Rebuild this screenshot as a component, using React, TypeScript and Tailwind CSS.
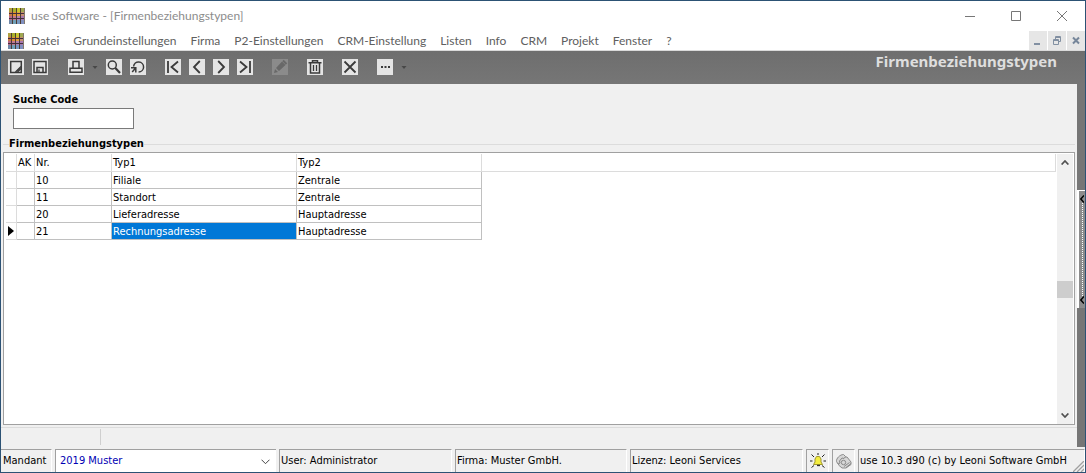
import type { ReactNode } from "react";

const menu = [
  "Datei", "Grundeinstellungen", "Firma", "P2-Einstellungen", "CRM-Einstellung",
  "Listen", "Info", "CRM", "Projekt", "Fenster", "?",
];

const rows = [
  { nr: "10", typ1: "Filiale", typ2: "Zentrale" },
  { nr: "11", typ1: "Standort", typ2: "Zentrale" },
  { nr: "20", typ1: "Lieferadresse", typ2: "Hauptadresse" },
  { nr: "21", typ1: "Rechnungsadresse", typ2: "Hauptadresse", active: true },
];

const logoColors = [
  ["#b0a040", "#a8b02c", "#c8c830", "#a0a850"],
  ["#c87848", "#e09030", "#e0a040", "#c89070"],
  ["#b86888", "#c07890", "#b080b0", "#a878b0"],
  ["#7088a8", "#70a0b8", "#7898c0", "#8090c0"],
];

function AppLogo() {
  return (
    <svg viewBox="0 0 16 16" className="size-4 shrink-0" aria-hidden="true" shapeRendering="crispEdges">
      {logoColors.map((line, y) =>
        line.map((color, x) => <rect key={`${x}-${y}`} x={x * 4} y={y * 4} width="4" height="4" fill={color} />),
      )}
      <path d="M3.5 0v16M7.5 0v16M11.5 0v16" stroke="#4c3c34" />
      <path d="M0 5.5h16M0 10.5h16" stroke="#40303c" />
      <path d="M15.5 0v16" stroke="#84786c" />
    </svg>
  );
}

function Tool({ label, children, disabled = false }: { label: string; children: ReactNode; disabled?: boolean }) {
  return (
    <button
      type="button"
      aria-label={label}
      disabled={disabled}
      className="size-4 shrink-0 bg-[#e4e4e4] text-[#3a3a3a] disabled:bg-[#8b8b8b] disabled:text-[#686868]"
    >
      <svg viewBox="0 0 16 16" className="size-4" fill="none" stroke="currentColor" strokeWidth="1.5">
        {children}
      </svg>
    </button>
  );
}

function Caret() {
  return (
    <svg viewBox="0 0 6 3" className="h-[3px] w-[6px] shrink-0" aria-hidden="true">
      <path d="M.5 0h5L3 3z" fill="#484848" />
    </svg>
  );
}

function Pane({ className, children }: { className: string; children: ReactNode }) {
  return (
    <div
      className={`flex items-center overflow-hidden border-t border-l border-[#a0a0a0] border-r border-r-white whitespace-nowrap ${className}`}
    >
      {children}
    </div>
  );
}

function Toolbar() {
  return (
    <div className="flex h-[33px] items-start bg-linear-to-b from-[#6e6e6e] to-[#767676] pr-[28px] pl-[7px]">
      <div className="flex items-center gap-5 pt-2">
        <div className="flex gap-2">
          <Tool label="Neu">
            <path d="M2.7 2.5h10.6v11H2.7z" />
            <path d="M13 7.5l-5.5 5.5M9.5 13l3.5-3.5" strokeWidth="1.3" />
          </Tool>
          <Tool label="Speichern">
            <path d="M2 2.5h12v11H2zM5 13V8.5h6V13" />
            <path d="M7 10.5v3" strokeWidth="1.2" />
          </Tool>
        </div>
        <div className="flex items-center gap-[19px]">
          <div className="flex items-center gap-2">
            <Tool label="Drucken">
              <path d="M5 9V2.5h6V9M2 9.2h12v4H2z" />
            </Tool>
            <Caret />
            <Tool label="Suchen">
              <circle cx="6.3" cy="6" r="4" />
              <path d="M9.3 9l4.7 5" strokeWidth="2.2" />
            </Tool>
            <Tool label="Aktualisieren">
              <path d="M3.6 7.5a5 5 0 1 1 5 5.5M1 8.8h4.8v4.7M5.6 9l-3.4 4" />
            </Tool>
          </div>
          <div className="flex gap-2">
            <Tool label="Erster Datensatz">
              <path d="M3 2v12M13 2.5L6.5 8l6.5 5.5" strokeWidth="1.8" />
            </Tool>
            <Tool label="Vorheriger Datensatz">
              <path d="M10.8 2L5 8l5.8 6" strokeWidth="1.8" />
            </Tool>
            <Tool label="Nächster Datensatz">
              <path d="M5.2 2L11 8l-5.8 6" strokeWidth="1.8" />
            </Tool>
            <Tool label="Letzter Datensatz">
              <path d="M13 2v12M3 2.5L9.5 8 3 13.5" strokeWidth="1.8" />
            </Tool>
          </div>
          <Tool label="Bearbeiten" disabled>
            <path d="M2 14l1-4 3 3zM4 9l6-6.5 3.5 3.5L7 12z" fill="currentColor" stroke="none" />
            <path d="M11 1.5L14.5 5" strokeWidth="2" />
          </Tool>
          <Tool label="Löschen">
            <path d="M1.5 3.7h13M5.5 3V1.7h5V3M3.5 4v10h9V4" strokeWidth="1.5" />
            <path d="M6.5 6v6M9.5 6v6" strokeWidth="1.3" />
          </Tool>
          <Tool label="Abbrechen">
            <path d="M2.5 2.5l11 11M13.5 2.5l-11 11" strokeWidth="1.8" />
          </Tool>
          <div className="flex items-center gap-2">
            <Tool label="Mehr">
              <path d="M4 8h2M7.5 8h2M11 8h2" strokeWidth="2" />
            </Tool>
            <Caret />
          </div>
        </div>
      </div>
      <h1 className="ml-auto font-['Noto_Sans',sans-serif] text-[15px] leading-5 font-bold text-[#dedede]">
        Firmenbeziehungstypen
      </h1>
    </div>
  );
}

function Scrollbar() {
  return (
    <div className="mr-px flex w-4 shrink-0 flex-col bg-[#f0f0f0]">
      <button type="button" aria-label="Nach oben" className="flex h-[17px] items-center justify-center">
        <svg viewBox="0 0 8 5" className="h-[5px] w-2" fill="none" stroke="#505050" strokeWidth="1.7">
          <path d="M.6 4.5L4 1l3.4 3.5" />
        </svg>
      </button>
      <div className="grow-[109]" />
      <div className="h-[17px] bg-[#cdcdcd]" />
      <div className="grow-[109]" />
      <button type="button" aria-label="Nach unten" className="flex h-[17px] items-center justify-center">
        <svg viewBox="0 0 8 5" className="h-[5px] w-2" fill="none" stroke="#505050" strokeWidth="1.7">
          <path d="M.6 .5L4 4 7.4 .5" />
        </svg>
      </button>
    </div>
  );
}

function Grid() {
  const cell = "h-[17px] border-r border-b border-[#c0c0c0] p-0 pt-0.5 pl-px leading-[14px]";
  const head = "h-[18px] border-r border-b border-[#dcdcdc] p-0 pt-px pl-px text-left leading-4 font-normal";
  return (
    <table className="w-full table-fixed border-separate border-spacing-0">
      <colgroup>
        <col className="w-[11px]" />
        <col className="w-[18px]" />
        <col className="w-[77px]" />
        <col className="w-[185px]" />
        <col className="w-[185px]" />
        <col />
      </colgroup>
      <thead>
        <tr>
          <th className={head} aria-label="Markierung" />
          <th className={head}>AK</th>
          <th className={head}>Nr.</th>
          <th className={head}>Typ1</th>
          <th className={head}>Typ2</th>
          <th className={head} aria-label="Leer" />
        </tr>
      </thead>
      <tbody>
        {rows.map((r) => (
          <tr key={r.nr}>
            <td className="h-[17px] border-r border-b border-[#dcdcdc] p-0">
              {r.active && (
                <svg viewBox="0 0 6 10" className="ml-0.5 h-[10px] w-[6px]" aria-label="Aktueller Datensatz">
                  <path d="M0 0l6 5-6 5z" fill="#000" />
                </svg>
              )}
            </td>
            <td className={cell} />
            <td className={cell}>{r.nr}</td>
            <td className={r.active ? `${cell} bg-[#0078d7] text-white` : cell}>{r.typ1}</td>
            <td className={cell}>{r.typ2}</td>
            <td className="p-0" />
          </tr>
        ))}
      </tbody>
    </table>
  );
}

export default function App() {
  return (
    <div className="flex min-h-screen flex-col border border-[#2c5274] bg-[#f0f0f0] font-['DejaVu_Sans_Condensed','Noto_Sans',sans-serif] text-[11px] text-black">
      <header className="bg-white font-['Lato','Noto_Sans',sans-serif] text-[12px]">
        <div className="flex h-[30px] items-center gap-1.5 pr-[18px] pl-2 text-[#8c8c8c]">
          <AppLogo />
          <span>use Software - [Firmenbeziehungstypen]</span>
          <div className="ml-auto flex items-center gap-9">
            <button type="button" aria-label="Minimieren" className="size-[10px]">
              <svg viewBox="0 0 10 10" stroke="#777"><path d="M0 5.5h10" /></svg>
            </button>
            <button type="button" aria-label="Maximieren" className="size-[10px]">
              <svg viewBox="0 0 10 10" stroke="#777" fill="none"><path d="M.5 .5h9v9h-9z" /></svg>
            </button>
            <button type="button" aria-label="Schließen" className="size-[10px]">
              <svg viewBox="0 0 10 10" stroke="#777"><path d="M0 0l10 10M10 0L0 10" /></svg>
            </button>
          </div>
        </div>
        <div className="flex h-5 items-center border-b border-[#dadada] pl-[7px] text-[#606060]">
          <AppLogo />
          <nav className="ml-[7px] flex gap-3.5">
            {menu.map((m) => (
              <button type="button" key={m}>{m}</button>
            ))}
          </nav>
          <div className="ml-auto flex gap-px">
            <button type="button" aria-label="Fenster minimieren" className="h-[19px] w-[18px] bg-[#e6e6e6]">
              <svg viewBox="0 0 18 19" stroke="#8290a2" strokeWidth="2"><path d="M5 13h6" /></svg>
            </button>
            <button type="button" aria-label="Fenster wiederherstellen" className="h-[19px] w-[18px] bg-[#e6e6e6]">
              <svg viewBox="0 0 18 19" stroke="#8290a2" fill="none">
                <path d="M5.5 8.5h5v5h-5zM5 9.5h6M7.5 8V5.5h5v5H11M7 6.5h6" />
              </svg>
            </button>
            <button type="button" aria-label="Fenster schließen" className="h-[19px] w-[18px] bg-[#e6e6e6]">
              <svg viewBox="0 0 18 19" stroke="#76869a" strokeWidth="2"><path d="M6 6.5l6 6M12 6.5l-6 6" /></svg>
            </button>
          </div>
        </div>
      </header>

      <Toolbar />

      <div className="flex grow">
        <main className="flex min-w-0 grow flex-col">
          <div className="flex flex-col items-start pt-2 pl-3">
            <label htmlFor="code" className="leading-4 font-bold">Suche Code</label>
            <input id="code" type="text" className="h-[21px] w-[121px] border border-[#7a7a7a] bg-white px-1 outline-none" />
          </div>
          <section className="mt-[7px] flex grow flex-col pr-0.5 pl-0.5">
            <div className="flex h-4 items-center">
              <div className="h-px w-1.5 bg-[#dcdcdc]" />
              <h2 className="font-bold">Firmenbeziehungstypen</h2>
              <div className="h-px grow bg-[#dcdcdc]" />
            </div>
            <div className="flex grow border border-[#a0a0a0] bg-white pt-px">
              <div className="min-w-0 grow pr-px pl-0.5"><Grid /></div>
              <Scrollbar />
            </div>
          </section>
          <div className="mt-0.5 h-5 border-t border-[#dcdcdc]">
            <div className="mt-px h-4 w-[100px] border-r border-[#cfcfcf]" />
          </div>
        </main>
        <aside className="flex w-2 shrink-0 flex-col bg-[#767676]">
          <div className="grow-[105]" />
          <button
            type="button"
            aria-label="Seitenleiste einblenden"
            className="flex h-[118px] flex-col items-center justify-between border-t border-l-2 border-white bg-[#8c8c8c] py-1"
          >
            <svg viewBox="0 0 4 8" className="h-2 w-1" fill="none" stroke="#000" strokeWidth="1.5"><path d="M4 .5L.8 4 4 7.5" /></svg>
            <span className="w-px grow border-l border-dotted border-white" />
            <svg viewBox="0 0 4 8" className="h-2 w-1" fill="none" stroke="#000" strokeWidth="1.5"><path d="M4 .5L.8 4 4 7.5" /></svg>
          </button>
          <div className="grow-[138]" />
        </aside>
      </div>

      <footer className="flex h-[25px] gap-[3px] pt-0.5">
        <label htmlFor="mandant" className="flex w-[51px] shrink-0 items-center border-t border-r border-t-[#a0a0a0] border-r-white pl-0.5">
          Mandant
        </label>
        <div className="relative flex w-[221px] shrink-0 border-t border-l border-[#a0a0a0] bg-white">
          <select id="mandant" className="w-full appearance-none bg-transparent pl-1 text-[#0000b4] outline-none">
            <option>2019 Muster</option>
          </select>
          <svg viewBox="0 0 9 6" className="pointer-events-none absolute top-[9px] right-1.5 h-1.5 w-[9px]" fill="none" stroke="#444">
            <path d="M.5 .7l4 4 4-4" />
          </svg>
        </div>
        <Pane className="w-[173px] shrink-0 pl-px">User: Administrator</Pane>
        <Pane className="w-[172px] shrink-0 pl-px">Firma: Muster GmbH.</Pane>
        <Pane className="w-[173px] shrink-0 pl-px">Lizenz: Leoni Services</Pane>
        <Pane className="w-[23px] shrink-0 justify-center">
          <svg viewBox="0 0 16 16" className="size-4" aria-label="Hinweis">
            <path d="M1.5 1.5l2.5 2.5M14.5 1.5L12 4M0 8h2.5M13.5 8H16M1.5 14.5L4 12.5M14.5 14.5L12 12.5M8 0v2" stroke="#222" />
            <path d="M3.5 11.5L5 9V6l1.5-2.5h3L11 6v3l1.5 2.5z" fill="#f4ee40" stroke="#a09830" />
            <path d="M7 12.5h3" stroke="#333" strokeWidth="1.3" />
          </svg>
        </Pane>
        <Pane className="w-[23px] shrink-0 justify-center">
          <svg viewBox="0 0 18 16" className="h-4 w-[18px]" fill="#d6d6d6" stroke="#8a8a8a" aria-label="Telefon">
            <path d="M4 8l3-4 5 0 4 5v2.5L11 15H7L3.5 12z" />
            <path d="M1.5 8.5C1 5.5 5 1.5 8.5 1.5l2 2L9 5.5l-2-.5-2.5 3 .5 2-2 1z" />
            <circle cx="8.5" cy="9.5" r="2.2" />
            <path d="M9 13.5l5.5-4M11 14.5l5-4" />
          </svg>
        </Pane>
        <Pane className="grow justify-between pl-px">
          <span>use 10.3 d90 (c) by Leoni Software GmbH</span>
          <svg viewBox="0 0 11 11" className="size-[11px] self-end" stroke="#a0a0a0" strokeWidth="1.3" aria-hidden="true">
            <path d="M0 11L11 0M4 11l7-7M8 11l3-3" />
          </svg>
        </Pane>
      </footer>
    </div>
  );
}
